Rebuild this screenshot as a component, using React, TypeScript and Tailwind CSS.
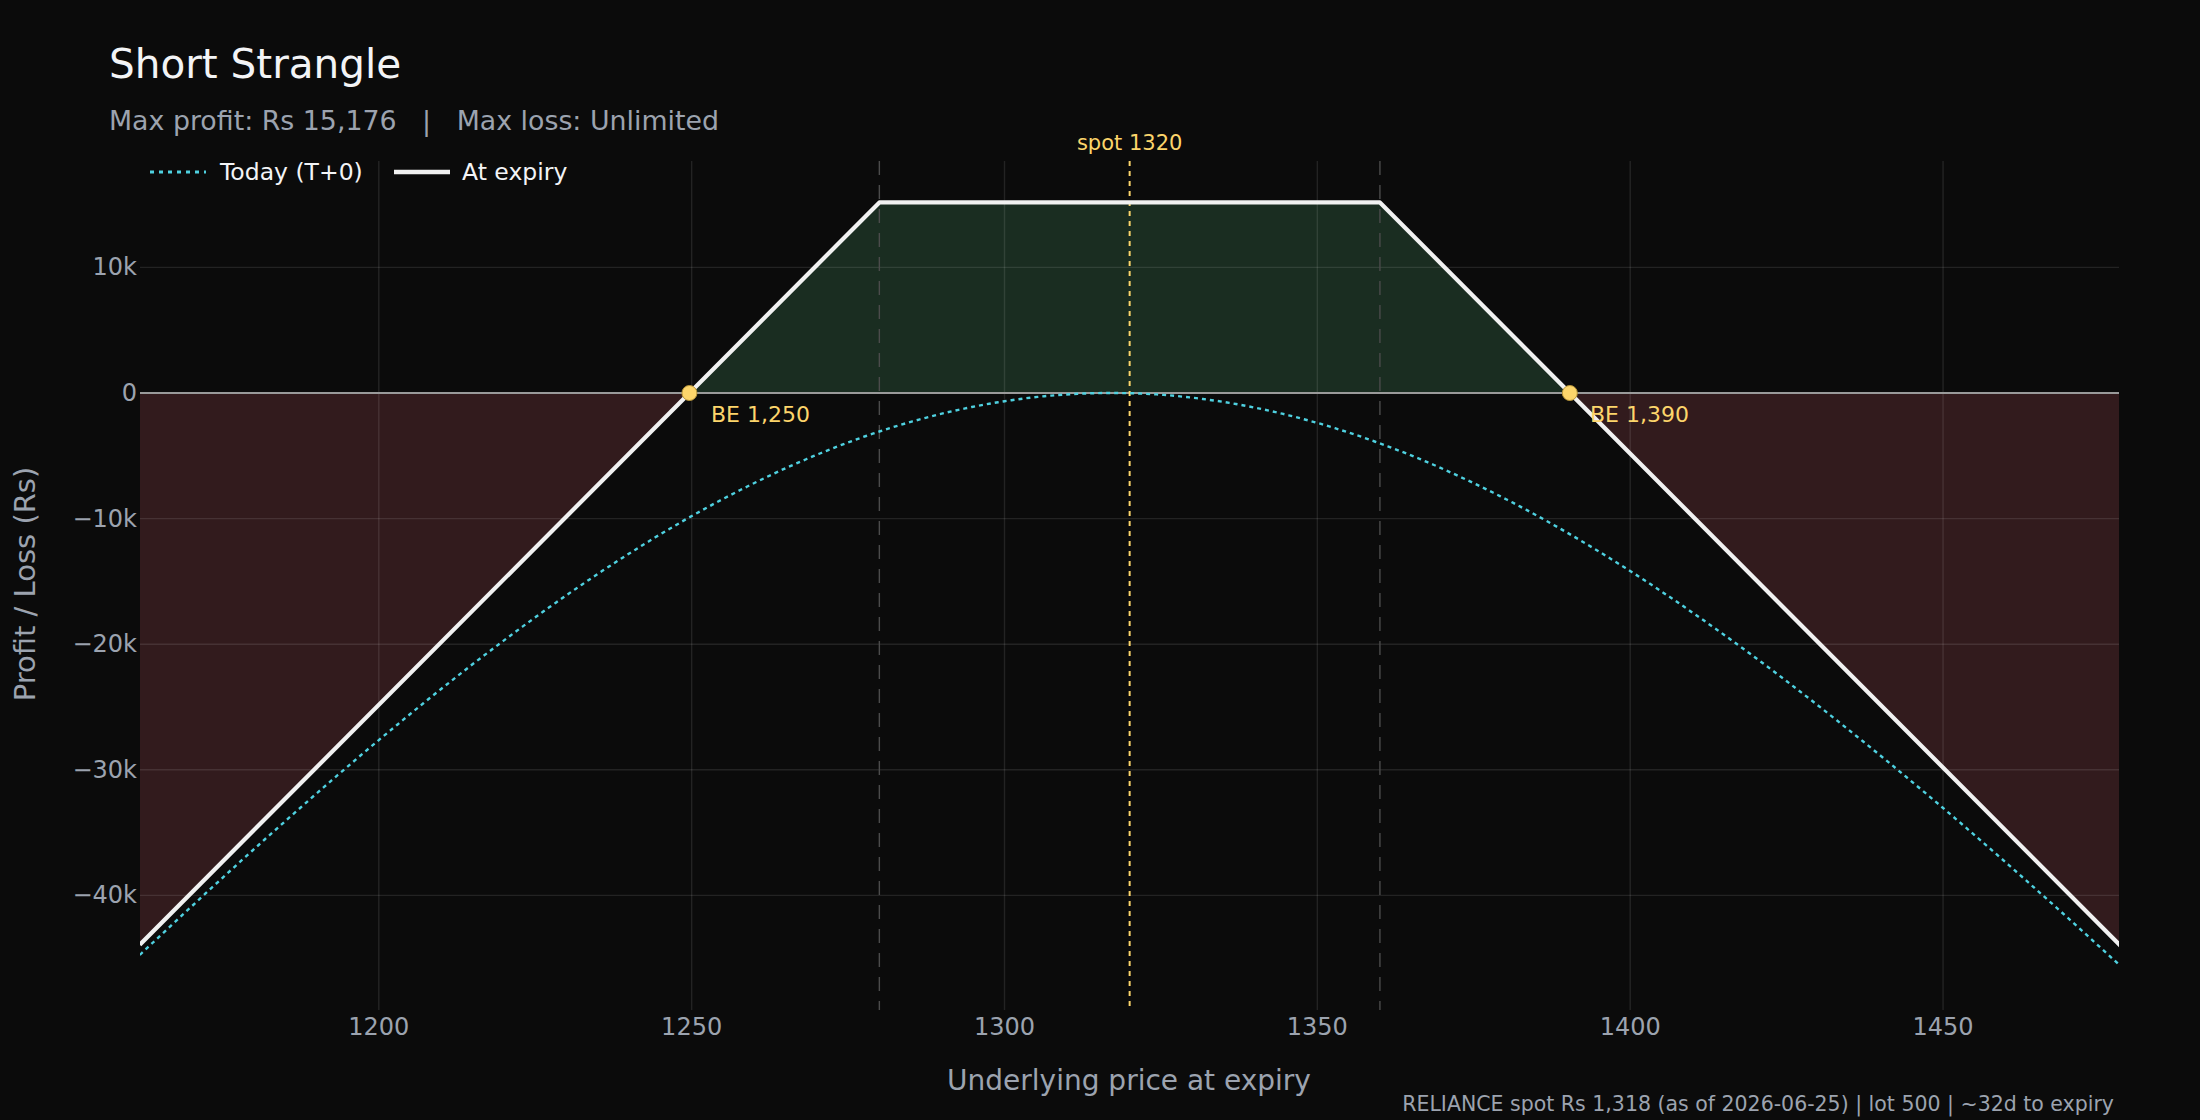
import React from "react";

const X0 = 140, X1 = 2119, Y0 = 161, Y1 = 1010;
const px = (p: number) => 378.8 + (p - 1200) * 6.257;
const py = (v: number) => 393 - (v / 10000) * 125.6;
const PMIN = 1161.8, PMAX = 1478.4;
const KP = 1280, KC = 1360, LOT = 500, CREDIT = 15176;
const T = 32 / 365;

function erf(x: number) {
  const s = x < 0 ? -1 : 1; x = Math.abs(x);
  const t = 1 / (1 + 0.3275911 * x);
  const y = 1 - ((((1.061405429 * t - 1.453152027) * t + 1.421413741) * t - 0.284496736) * t + 0.254829592) * t * Math.exp(-x * x);
  return s * y;
}
const N = (x: number) => 0.5 * (1 + erf(x / Math.SQRT2));
function call(S: number, K: number, s: number) {
  const d1 = (Math.log(S / K) + 0.5 * s * s * T) / (s * Math.sqrt(T));
  const d2 = d1 - s * Math.sqrt(T);
  return S * N(d1) - K * N(d2);
}
const put = (S: number, K: number, s: number) => call(S, K, s) - S + K;
const prem = (S: number, s: number) => put(S, KP, s) + call(S, KC, s);
let lo = 0.01, hi = 2;
for (let i = 0; i < 60; i++) { const m = (lo + hi) / 2; if (prem(1318, m) * LOT > CREDIT) hi = m; else lo = m; }
const SIG = (lo + hi) / 2;
const t0 = (S: number) => CREDIT - LOT * prem(S, SIG);
const exp = (S: number) => CREDIT - LOT * (Math.max(KP - S, 0) + Math.max(S - KC, 0));
const BE1 = KP - CREDIT / LOT, BE2 = KC + CREDIT / LOT;

const t0Path = (() => {
  const pts: string[] = [];
  for (let i = 0; i <= 300; i++) { const S = PMIN + ((PMAX - PMIN) * i) / 300; pts.push(`${px(S).toFixed(1)},${py(t0(S)).toFixed(1)}`); }
  return "M" + pts.join(" L");
})();
const expPts = [PMIN, KP, KC, PMAX].map((S) => `${px(S).toFixed(1)},${py(exp(S)).toFixed(1)}`);
const expPath = "M" + expPts.join(" L");
const greenPath = `M${px(BE1)},${py(0)} L${px(KP)},${py(CREDIT)} L${px(KC)},${py(CREDIT)} L${px(BE2)},${py(0)} Z`;
const redL = `M${px(PMIN)},${py(0)} L${px(BE1)},${py(0)} L${px(PMIN)},${py(exp(PMIN))} Z`;
const redR = `M${px(BE2)},${py(0)} L${px(PMAX)},${py(0)} L${px(PMAX)},${py(exp(PMAX))} Z`;

const F = "'DejaVu Sans', Verdana, sans-serif";

export default function App() {
  const xt = [1200, 1250, 1300, 1350, 1400, 1450];
  const yt = [10000, 0, -10000, -20000, -30000, -40000];
  const lab = (v: number) => (v === 0 ? "0" : v < 0 ? `\u2212${-v / 1000}k` : `${v / 1000}k`);
  return (
    <div className="w-[2200px] h-[1120px] bg-[#0b0b0b] flex flex-col overflow-hidden" style={{ fontFamily: F }}>
      <div className="h-[120px] pl-[109px] pt-[39px] flex flex-col">
        <div className="text-[40.5px] leading-[50px] text-[#f3f4f6]">Short Strangle</div>
        <div className="mt-[15px] text-[26.8px] leading-[34px] text-[#9ca3af] whitespace-pre">Max profit: Rs 15,176   |   Max loss: Unlimited</div>
      </div>
      <svg width={2200} height={1000} viewBox="0 120 2200 1000" className="block">
        <defs>
          <clipPath id="pc"><rect x={X0} y={Y0} width={X1 - X0} height={Y1 - Y0} /></clipPath>
        </defs>
        <g clipPath="url(#pc)">
          <path d={greenPath} fill="#1a2d21" />
          <path d={redL} fill="#321b1d" />
          <path d={redR} fill="#321b1d" />
        </g>
        {xt.map((v) => (
          <line key={v} x1={px(v)} x2={px(v)} y1={Y0} y2={Y1} stroke="#ffffff" strokeOpacity={0.1} strokeWidth={1.4} />
        ))}
        {yt.filter((v) => v !== 0).map((v) => (
          <line key={v} x1={X0} x2={X1} y1={py(v)} y2={py(v)} stroke="#ffffff" strokeOpacity={0.1} strokeWidth={1.4} />
        ))}
        {[KP, KC].map((k) => (
          <line key={k} x1={px(k)} x2={px(k)} y1={Y0} y2={Y1} stroke="#4b4b4b" strokeWidth={1.4} strokeDasharray="14 10" />
        ))}
        <line x1={X0} x2={X1} y1={py(0)} y2={py(0)} stroke="#9a9a9a" strokeWidth={2.2} />
        <line x1={px(1320)} x2={px(1320)} y1={Y0} y2={Y1} stroke="#fcd56b" strokeWidth={2} strokeDasharray="5 5" />
        <g clipPath="url(#pc)">
          <path d={t0Path} fill="none" stroke="#4fd1e0" strokeWidth={2.4} strokeDasharray="4 4" />
          <path d={expPath} fill="none" stroke="#f1f1f1" strokeWidth={4.2} strokeLinejoin="round" />
        </g>
        <circle cx={px(BE1)} cy={py(0)} r={7.5} fill="#fcd56b" stroke="#b8953a" strokeWidth={1} />
        <circle cx={px(BE2)} cy={py(0)} r={7.5} fill="#fcd56b" stroke="#b8953a" strokeWidth={1} />
        <text x={711} y={422} fontSize={22} fill="#fcd56b" fontFamily={F}>BE 1,250</text>
        <text x={1590} y={422} fontSize={22} fill="#fcd56b" fontFamily={F}>BE 1,390</text>
        <text x={px(1320)} y={150} fontSize={21} fill="#fcd56b" textAnchor="middle" fontFamily={F}>spot 1320</text>
        {xt.map((v) => (
          <text key={v} x={px(v)} y={1035} fontSize={24} fill="#9ca3af" textAnchor="middle" fontFamily={F}>{v}</text>
        ))}
        {yt.map((v) => (
          <text key={v} x={137} y={py(v) + 8} fontSize={24} fill="#9ca3af" textAnchor="end" fontFamily={F}>{lab(v)}</text>
        ))}
        <text x={1129} y={1090} fontSize={28} fill="#9ca3af" textAnchor="middle" fontFamily={F}>Underlying price at expiry</text>
        <text x={35} y={584} fontSize={29} fill="#9ca3af" textAnchor="middle" transform="rotate(-90 35 584)" fontFamily={F}>Profit / Loss (Rs)</text>
        <text x={2114} y={1111} fontSize={20.5} fill="#9ca3af" textAnchor="end" fontFamily={F}>RELIANCE spot Rs 1,318 (as of 2026-06-25) | lot 500 | ~32d to expiry</text>
        <line x1={150} x2={206} y1={172} y2={172} stroke="#4fd1e0" strokeWidth={3} strokeDasharray="4 5" />
        <text x={220} y={180} fontSize={23.5} fill="#f3f4f6" fontFamily={F}>Today (T+0)</text>
        <line x1={394} x2={450} y1={172} y2={172} stroke="#f1f1f1" strokeWidth={4.5} />
        <text x={462} y={180} fontSize={23.5} fill="#f3f4f6" fontFamily={F}>At expiry</text>
      </svg>
    </div>
  );
}
